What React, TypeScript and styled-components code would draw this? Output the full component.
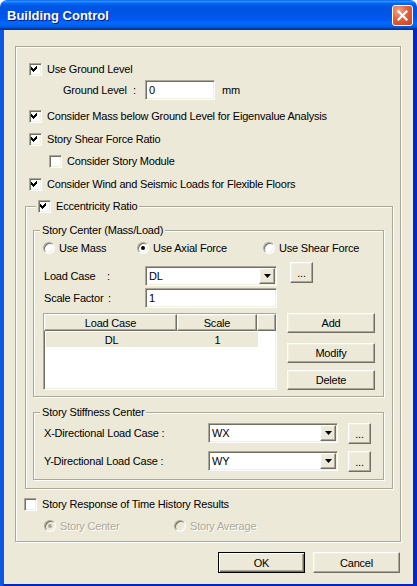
import React from "react";
import styled, { createGlobalStyle, css } from "styled-components";

const face = "#ECE9D8";

const GlobalStyle = createGlobalStyle`
  html, body { margin: 0; padding: 0; background: #fff; }
  * { box-sizing: border-box; }
`;

const sunken = css`
  border: 1px solid;
  border-color: #aca899 #fff #fff #aca899;
  box-shadow: inset 1px 1px 0 #716f64, inset -1px -1px 0 #f1efe2;
`;

const raised = css`
  border: 1px solid;
  border-color: #fff #716f64 #716f64 #fff;
  box-shadow: inset -1px -1px 0 #aca899, inset 1px 1px 0 #f1efe2;
`;

const Window = styled.div`
  width: 417px;
  height: 586px;
  display: flex;
  flex-direction: column;
  border-radius: 7px 7px 0 0;
  overflow: hidden;
  font-family: Tahoma, "Liberation Sans", Arial, sans-serif;
  font-size: 11px;
  letter-spacing: -0.2px;
  color: #000;
`;

const TitleBar = styled.div`
  height: 30px;
  flex: none;
  display: flex;
  align-items: center;
  justify-content: space-between;
  padding: 0 4px 0 7px;
  background: linear-gradient(
    #0058ee 0%,
    #3593ff 4%,
    #288eff 6%,
    #127dff 8%,
    #036ffc 10%,
    #0262ee 14%,
    #0057e5 20%,
    #0054e3 24%,
    #0055eb 56%,
    #005bf5 66%,
    #026afe 76%,
    #0062ef 86%,
    #0052d6 92%,
    #0040ab 94%,
    #003092 100%
  );
`;

const Title = styled.span`
  color: #fff;
  font: bold 13px "Liberation Sans", Arial, sans-serif;
  letter-spacing: 0;
  text-shadow: 1px 1px 0 #0a1883;
`;

const CloseBox = styled.div`
  width: 21px;
  height: 21px;
  border: 1px solid #fff;
  border-radius: 3px;
  background: radial-gradient(circle at 30% 25%, #f6a488 0%, #e3603a 45%, #c8401a 100%);
  display: flex;
  align-items: center;
  justify-content: center;
`;

const Frame = styled.div`
  flex: 1;
  display: flex;
  flex-direction: column;
  background: ${face};
  border: 4px solid #0831d9;
  border-top: 0;
  border-left-color: #0b57e4;
  border-right-color: #0427c9;
  border-bottom-color: #0426c4;
  padding: 16px 12px 11px 11px;
`;

const Group = styled.div<{ $pad: string; $top?: number }>`
  position: relative;
  display: flex;
  flex-direction: column;
  border: 1px solid #aca899;
  box-shadow: 1px 1px 0 #fff, inset 1px 1px 0 #fff;
  padding: ${(p) => p.$pad};
  margin-top: ${(p) => p.$top ?? 0}px;
`;

const Caption = styled.div<{ $left: number }>`
  position: absolute;
  top: -7px;
  left: ${(p) => p.$left}px;
  height: 13px;
  line-height: 13px;
  padding: 0 2px;
  background: ${face};
  display: flex;
  align-items: center;
  gap: 4px;
`;

const Row = styled.div<{ $top?: number; $indent?: number; $h?: number }>`
  display: flex;
  align-items: center;
  height: ${(p) => p.$h ?? 18}px;
  margin-top: ${(p) => p.$top ?? 0}px;
  padding-left: ${(p) => p.$indent ?? 0}px;
`;

const TopRow = styled.div<{ $top?: number; $gap?: number }>`
  display: flex;
  align-items: flex-start;
  margin-top: ${(p) => p.$top ?? 0}px;
  gap: ${(p) => p.$gap ?? 0}px;
`;

const Option = styled.label<{ $w?: number; $disabled?: boolean }>`
  display: flex;
  align-items: center;
  gap: 5px;
  width: ${(p) => (p.$w ? `${p.$w}px` : "auto")};
  white-space: nowrap;
  color: ${(p) => (p.$disabled ? "#aca899" : "#000")};
  text-shadow: ${(p) => (p.$disabled ? "1px 1px 0 #fff" : "none")};
`;

const Box = styled.span`
  ${sunken};
  width: 13px;
  height: 13px;
  flex: none;
  background: #fff;
  display: flex;
`;

const RadioDot = styled.span<{ $on?: boolean; $disabled?: boolean }>`
  ${sunken};
  position: relative;
  width: 12px;
  height: 12px;
  flex: none;
  border-radius: 50%;
  margin-right: -1px;
  background: ${(p) => (p.$disabled ? face : "#fff")};
  &::after {
    content: "";
    display: ${(p) => (p.$on ? "block" : "none")};
    position: absolute;
    left: 3px;
    top: 3px;
    width: 4px;
    height: 4px;
    border-radius: 50%;
    background: ${(p) => (p.$disabled ? "#aca899" : "#000")};
  }
`;

const LabelText = styled.span<{ $w: number }>`
  width: ${(p) => p.$w}px;
  flex: none;
  white-space: nowrap;
`;

const Colon = styled.span<{ $w: number }>`
  width: ${(p) => p.$w}px;
  flex: none;
`;

const Field = styled.div<{ $w: number; $top?: number }>`
  ${sunken};
  width: ${(p) => p.$w}px;
  height: 20px;
  flex: none;
  margin-top: ${(p) => p.$top ?? 0}px;
  background: #fff;
  display: flex;
  align-items: center;
  padding-left: 3px;
`;

const FieldValue = styled.span`
  flex: 1;
`;

const DropArrow = styled.span`
  ${raised};
  width: 16px;
  height: 16px;
  margin-right: 1px;
  background: ${face};
  display: flex;
  align-items: center;
  justify-content: center;
`;

const Button = styled.div<{ $w: number; $h?: number; $default?: boolean }>`
  width: ${(p) => p.$w}px;
  height: ${(p) => p.$h ?? 21}px;
  flex: none;
  background: ${face};
  display: flex;
  align-items: center;
  justify-content: center;
  ${(p) =>
    p.$default
      ? css`
          border: 1px solid #000;
          box-shadow: inset 1px 1px 0 #fff, inset -1px -1px 0 #716f64, inset -2px -2px 0 #aca899;
        `
      : raised};
`;

const Table = styled.div`
  ${sunken};
  width: 234px;
  height: 77px;
  flex: none;
  background: #fff;
  display: flex;
  flex-direction: column;
`;

const HeaderRow = styled.div`
  display: flex;
  height: 17px;
  flex: none;
`;

const HeaderCell = styled.div<{ $w?: number }>`
  ${raised};
  width: ${(p) => (p.$w ? `${p.$w}px` : "auto")};
  flex: ${(p) => (p.$w ? "none" : 1)};
  background: ${face};
  display: flex;
  align-items: center;
  justify-content: center;
`;

const DataRow = styled.div`
  display: flex;
  height: 15px;
  margin: 1px 0 0 2px;
`;

const DataCell = styled.div<{ $w: number }>`
  width: ${(p) => p.$w}px;
  background: ${face};
  display: flex;
  align-items: center;
  justify-content: center;
`;

const SideButtons = styled.div`
  display: flex;
  flex-direction: column;
`;

const ButtonBar = styled.div`
  display: flex;
  justify-content: flex-end;
  gap: 8px;
  margin: 10px 1px 0 0;
`;

const Check = ({ on, children }: { on?: boolean; children?: React.ReactNode }) => (
  <Option>
    <Box>
      {on && (
        <svg width="9" height="9" viewBox="0 0 9 9" shapeRendering="crispEdges">
          <path d="M1 3h1v1h1v1h1v-1h1v-1h1v-1h1v3h-1v1h-1v1h-1v1h-1v-1h-1v-1h-1z" fill="#000" />
        </svg>
      )}
    </Box>
    {children}
  </Option>
);

const Radio = ({
  on,
  disabled,
  w,
  children,
}: {
  on?: boolean;
  disabled?: boolean;
  w?: number;
  children: React.ReactNode;
}) => (
  <Option $w={w} $disabled={disabled}>
    <RadioDot $on={on} $disabled={disabled} />
    {children}
  </Option>
);

const Combo = ({ w, value, top }: { w: number; value: string; top?: number }) => (
  <Field $w={w} $top={top}>
    <FieldValue>{value}</FieldValue>
    <DropArrow>
      <svg width="7" height="4" viewBox="0 0 7 4">
        <path d="M0 0h7L3.5 4z" fill="#000" />
      </svg>
    </DropArrow>
  </Field>
);

export default function App() {
  return (
    <Window>
      <GlobalStyle />
      <TitleBar>
        <Title>Building Control</Title>
        <CloseBox>
          <svg width="11" height="11" viewBox="0 0 11 11">
            <path d="M1.5 1.5l8 8M9.5 1.5l-8 8" stroke="#fff" strokeWidth="2.2" strokeLinecap="square" />
          </svg>
        </CloseBox>
      </TitleBar>
      <Frame>
        <Group $pad="13px 7px 8px 9px">
          <Row $indent={4}>
            <Check on>Use Ground Level</Check>
          </Row>
          <Row $top={2} $h={20} $indent={38}>
            <LabelText $w={70}>Ground Level</LabelText>
            <Colon $w={12}>:</Colon>
            <Field $w={70}>0</Field>
            <LabelText $w={30} style={{ marginLeft: 7 }}>
              mm
            </LabelText>
          </Row>
          <Row $top={7} $indent={4}>
            <Check on>Consider Mass below Ground Level for Eigenvalue Analysis</Check>
          </Row>
          <Row $top={5} $indent={4}>
            <Check on>Story Shear Force Ratio</Check>
          </Row>
          <Row $top={4} $indent={24}>
            <Check>Consider Story Module</Check>
          </Row>
          <Row $top={5} $indent={4}>
            <Check on>Consider Wind and Seismic Loads for Flexible Floors</Check>
          </Row>

          <Group $pad="23px 8px 8px 7px" $top={13}>
            <Caption $left={10}>
              <Check on>Eccentricity Ratio</Check>
            </Caption>

            <Group $pad="10px 8px 6px 9px">
              <Caption $left={6}>Story Center (Mass/Load)</Caption>
              <Row $h={14}>
                <Radio w={94}>Use Mass</Radio>
                <Radio w={126} on>
                  Use Axial Force
                </Radio>
                <Radio>Use Shear Force</Radio>
              </Row>
              <TopRow $top={7}>
                <Row $h={20} $top={4} $indent={1}>
                  <LabelText $w={63}>Load Case</LabelText>
                  <Colon $w={38}>:</Colon>
                  <Combo w={132} value="DL" />
                </Row>
                <Button $w={23} style={{ marginLeft: 13 }}>
                  ...
                </Button>
              </TopRow>
              <Row $h={20} $top={2} $indent={1}>
                <LabelText $w={64}>Scale Factor</LabelText>
                <Colon $w={37}>:</Colon>
                <Field $w={132}>1</Field>
              </Row>
              <TopRow $top={5} $gap={10}>
                <Table>
                  <HeaderRow>
                    <HeaderCell $w={133}>Load Case</HeaderCell>
                    <HeaderCell $w={80}>Scale</HeaderCell>
                    <HeaderCell />
                  </HeaderRow>
                  <DataRow>
                    <DataCell $w={131}>DL</DataCell>
                    <DataCell $w={81}>1</DataCell>
                  </DataRow>
                </Table>
                <SideButtons>
                  <Button $w={88} $h={20}>
                    Add
                  </Button>
                  <Button $w={88} $h={20} style={{ marginTop: 10 }}>
                    Modify
                  </Button>
                  <Button $w={88} $h={20} style={{ marginTop: 7 }}>
                    Delete
                  </Button>
                </SideButtons>
              </TopRow>
            </Group>

            <Group $pad="10px 8px 7px 10px" $top={15}>
              <Caption $left={6}>Story Stiffness Center</Caption>
              <TopRow $gap={10}>
                <Row $h={20}>
                  <LabelText $w={164}>X-Directional Load Case :</LabelText>
                  <Combo w={130} value="WX" />
                </Row>
                <Button $w={23}>...</Button>
              </TopRow>
              <TopRow $gap={10} $top={7}>
                <Row $h={20}>
                  <LabelText $w={164}>Y-Directional Load Case :</LabelText>
                  <Combo w={130} value="WY" />
                </Row>
                <Button $w={23}>...</Button>
              </TopRow>
            </Group>
          </Group>

          <Row $top={6} style={{ marginLeft: -1 }}>
            <Check>Story Response of Time History Results</Check>
          </Row>
          <Row $top={6} $h={14} $indent={19}>
            <Radio w={130} on disabled>
              Story Center
            </Radio>
            <Radio disabled>Story Average</Radio>
          </Row>
        </Group>
        <ButtonBar>
          <Button $w={87} $default>
            OK
          </Button>
          <Button $w={87}>Cancel</Button>
        </ButtonBar>
      </Frame>
    </Window>
  );
}
